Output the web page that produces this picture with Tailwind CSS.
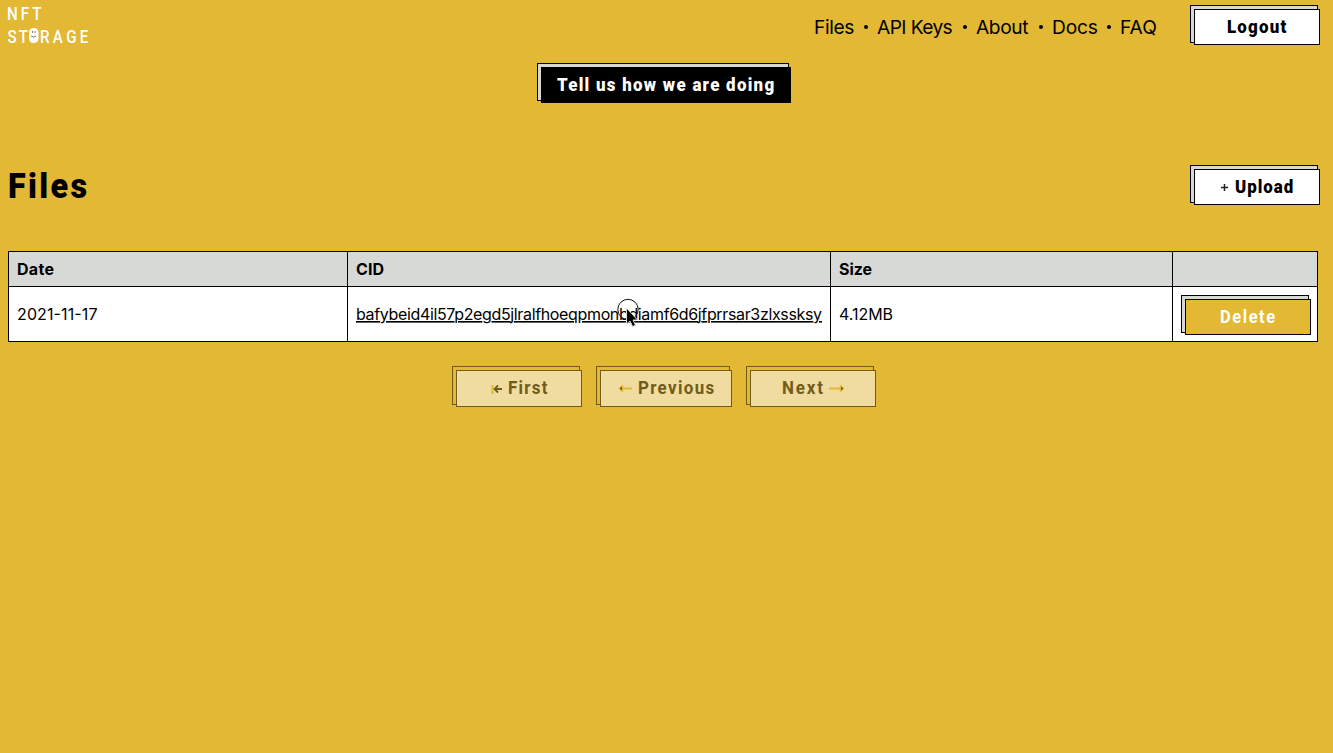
<!DOCTYPE html>
<html lang="en">
<head>
<meta charset="utf-8">
<title>NFT Storage - Files</title>
<script src="https://cdn.jsdelivr.net/npm/@tailwindcss/browser@4"></script>
</head>
<body class="h-screen overflow-hidden bg-[#e2b834] text-black font-['Inter','Liberation_Sans',sans-serif]">
<header class="flex h-[63px] items-start justify-between pl-[7px] pr-[13px]">
  <a aria-label="NFT Storage" class="block">
    <svg width="84" height="48" viewBox="0 0 84 48" fill="#fff" font-family="Roboto, sans-serif" font-size="18.500" font-weight="500">
      <text transform="translate(0 20) scale(.82 1)" textLength="42">NFT</text>
      <text transform="translate(.5 42.500) scale(.82 1)" textLength="25">ST</text>
      <rect x="22" y="28" width="9.500" height="15" rx="4.500"/>
      <path d="M25.500 31v2M28 31v2M24 36q2.500 2 5 0" stroke="#777" stroke-width="1" fill="none"/>
      <text transform="translate(33 42.500) scale(.82 1)" textLength="59">RAGE</text>
    </svg>
  </a>
  <div class="flex items-start pt-[5px]">
    <nav class="mr-8 flex h-[44px] items-center text-[19.2px]">
      <a class="w-[40px] whitespace-nowrap tracking-[-0.4px]">Files</a><span class="mx-[9.5px] size-1 rounded-full bg-black"></span>
      <a class="w-[76px] whitespace-nowrap tracking-[-0.6px]">API Keys</a><span class="mx-[9.5px] size-1 rounded-full bg-black"></span>
      <a class="w-[53px] whitespace-nowrap tracking-[-0.4px]">About</a><span class="mx-[9.5px] size-1 rounded-full bg-black"></span>
      <a class="w-[45px] whitespace-nowrap tracking-[-0.2px]">Docs</a><span class="mx-[9.5px] size-1 rounded-full bg-black"></span>
      <a class="w-[38px] whitespace-nowrap">FAQ</a>
    </nav>
    <button class="grid h-10 w-[130px] font-['Roboto']">
      <span class="col-start-1 row-start-1 mb-[2px] mr-[2px] border border-black bg-[#d7d9d7]"></span>
      <span class="col-start-1 row-start-1 ml-1 mt-1 flex items-center justify-center border border-black bg-white"><svg width="60" height="24"><text transform="translate(0 18) scale(.94 1)" font-size="18" font-weight="900" textLength="63">Logout</text></svg></span>
    </button>
  </div>
</header>
<div class="flex pl-[537px]">
  <a class="grid h-10 w-[254px] font-['Roboto']">
    <span class="col-start-1 row-start-1 mb-[2px] mr-[2px] border border-black bg-[#d7d9d7]"></span>
    <span class="col-start-1 row-start-1 ml-1 mt-1 flex items-center justify-center bg-black"><svg width="218" height="24"><text transform="translate(0 18) scale(.94 1)" font-size="18" font-weight="900" textLength="231" fill="#fff">Tell us how we are doing</text></svg></span>
  </a>
</div>
<main class="pl-2 pt-[62px]">
  <div class="flex h-[86px] items-start justify-between pr-[13px] font-['Roboto']">
    <h1><svg width="84" height="44"><text transform="translate(0 33) scale(.9 1)" font-size="36" font-weight="900" textLength="88">Files</text></svg></h1>
    <button class="grid h-10 w-[130px]">
      <span class="col-start-1 row-start-1 mb-[2px] mr-[2px] border border-black bg-[#d7d9d7]"></span>
      <span class="col-start-1 row-start-1 ml-1 mt-1 flex items-center justify-center border border-black bg-white"><svg width="74" height="24"><path d="M1 12.500h7M4.500 9v7" stroke="#222" stroke-width="1.500"/><text transform="translate(15 18) scale(.94 1)" font-size="18" font-weight="900" textLength="62">Upload</text></svg></span>
    </button>
  </div>
  <div class="grid h-[91px] w-[1310px] grid-cols-[338px_482px_341px_144px] grid-rows-[34px_54px] gap-px border border-black bg-black text-base">
    <div class="flex items-center bg-[#d7d9d7] pl-2 font-bold"><svg width="60" height="24"><text y="18" textLength="37">Date</text></svg></div>
    <div class="flex items-center bg-[#d7d9d7] pl-2 font-bold"><svg width="60" height="24"><text y="18" textLength="28">CID</text></svg></div>
    <div class="flex items-center bg-[#d7d9d7] pl-2 font-bold"><svg width="60" height="24"><text y="18" textLength="33">Size</text></svg></div>
    <div class="bg-[#d7d9d7]"></div>
    <div class="flex items-center bg-white pl-2"><svg width="90" height="24"><text y="18" textLength="80.500">2021-11-17</text></svg></div>
    <div class="relative flex items-center bg-white pl-2">
      <svg width="468" height="24"><text y="18" textLength="466" class="underline decoration-1">bafybeid4il57p2egd5jlralfhoeqpmonbdiamf6d6jfprrsar3zlxssksy</text></svg>
      <svg class="absolute left-[268px] top-[11px]" width="26" height="34" fill="none"><circle cx="12" cy="11.500" r="10.200" stroke="#111"/><path d="M10.500 10v16l3.500-3 2.500 5.500 3-1.300-2.500-5.200h4.500z" fill="#000" stroke="#ddd"/></svg>
    </div>
    <div class="flex items-center bg-white pl-2"><svg width="60" height="24"><text y="18" textLength="54">4.12MB</text></svg></div>
    <div class="bg-white pl-2 pt-2">
      <button class="grid h-10 w-[130px] font-['Roboto']">
        <span class="col-start-1 row-start-1 mb-[2px] mr-[2px] border border-black bg-[#d7d9d7]"></span>
        <span class="col-start-1 row-start-1 ml-1 mt-1 flex items-center justify-center border border-black bg-[#e2b834]"><svg width="56" height="24"><text transform="translate(0 18) scale(.92 1)" font-size="18" font-weight="700" textLength="60" fill="#fff">Delete</text></svg></span>
      </button>
    </div>
  </div>
  <div class="mt-6 flex gap-[14px] pl-[444px] font-['Roboto'] text-[#715c1a]">
    <button class="grid h-[41px] w-[130px]">
      <span class="col-start-1 row-start-1 mb-[2px] mr-[2px] border border-[#715c1a]"></span>
      <span class="col-start-1 row-start-1 ml-1 mt-1 flex items-center justify-center border border-[#715c1a] bg-[#f0dba0]"><svg width="57" height="24"><path d="M1.500 8v9" stroke="#e2b834" stroke-width="2"/><path d="M3 12h8M7 8.500l-3.500 3.500L7 15.500" stroke="#715c1a" stroke-width="1.800" fill="none"/><text transform="translate(17 17) scale(.94 1)" fill="currentColor" font-size="18" font-weight="700" textLength="42">First</text></svg></span>
    </button>
    <button class="grid h-[41px] w-[136px]">
      <span class="col-start-1 row-start-1 mb-[2px] mr-[2px] border border-[#715c1a]"></span>
      <span class="col-start-1 row-start-1 ml-1 mt-1 flex items-center justify-center border border-[#715c1a] bg-[#f0dba0]"><svg width="96" height="24"><path d="M2 11.500h12M5 8.500l-3 3 3 3" stroke="#e2b834" stroke-width="1.800" fill="none"/><path d="M1.500 11.500 4 9.500v4z" fill="#715c1a"/><text transform="translate(20 17) scale(.94 1)" fill="currentColor" font-size="18" font-weight="700" textLength="81">Previous</text></svg></span>
    </button>
    <button class="grid h-[41px] w-[130px]">
      <span class="col-start-1 row-start-1 mb-[2px] mr-[2px] border border-[#715c1a]"></span>
      <span class="col-start-1 row-start-1 ml-1 mt-1 flex items-center justify-center border border-[#715c1a] bg-[#f0dba0]"><svg width="63" height="24"><text transform="translate(0 17) scale(.94 1)" fill="currentColor" font-size="18" font-weight="700" textLength="43.500">Next</text><path d="M47 11.500h13M58 8.500l3 3-3 3" stroke="#e2b834" stroke-width="1.800" fill="none"/><path d="M61.500 11.500 59 9.500v4z" fill="#715c1a"/></svg></span>
    </button>
  </div>
</main>
</body>
</html>
